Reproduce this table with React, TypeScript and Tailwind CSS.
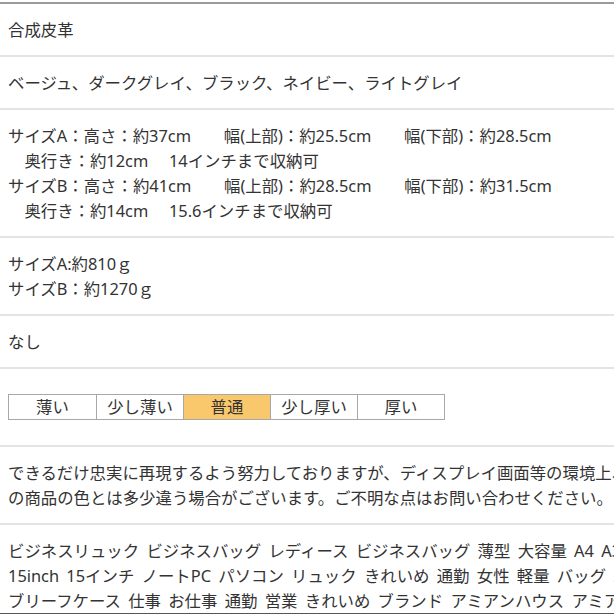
import React from "react";

const levels = ["薄い", "少し薄い", "普通", "少し厚い", "厚い"];

const sizes = [
  "サイズA：高さ：約37cm　　幅(上部)：約25.5cm　　幅(下部)：約28.5cm",
  "　奥行き：約12cm　 14インチまで収納可",
  "サイズB：高さ：約41cm　　幅(上部)：約28.5cm　　幅(下部)：約31.5cm",
  "　奥行き：約14cm　 15.6インチまで収納可",
];

const keywords = [
  "ビジネスリュック ビジネスバッグ レディース ビジネスバッグ 薄型 大容量 A4 A3 ノートパソコン",
  "15inch 15インチ ノートPC パソコン リュック きれいめ 通勤 女性 軽量 バッグ 2way 3way",
  "ブリーフケース 仕事 お仕事 通勤 営業 きれいめ ブランド アミアンハウス アミアン",
];

function Row({ children, className = "" }: { children: React.ReactNode; className?: string }) {
  return <div className={`px-2 border-b-2 border-[#e4e4e4] ${className}`}>{children}</div>;
}

export default function App() {
  return (
    <div
      className="w-[614px] h-[614px] overflow-hidden bg-white text-[#333333] text-[16.4px] leading-[25px] whitespace-nowrap"
      style={{ fontFamily: '"Noto Sans", "Noto Sans CJK JP", sans-serif' }}
    >
      <div className="mt-[2px] border-t-2 border-[#9a9a9a]">
        <Row className="py-[13px]">合成皮革</Row>
        <Row className="py-[13px]">ベージュ、ダークグレイ、ブラック、ネイビー、ライトグレイ</Row>
        <Row className="py-[13px]">
          {sizes.map((s) => (
            <div key={s}>{s}</div>
          ))}
        </Row>
        <Row className="py-[13px]">
          <div>サイズA:約810ｇ</div>
          <div>サイズB：約1270ｇ</div>
        </Row>
        <Row className="py-[13px]">なし</Row>
        <Row className="py-[25px]">
          <div className="flex w-fit border border-[#a8a8a8]">
            {levels.map((l, i) => (
              <div
                key={l}
                className={`w-[87px] h-[24px] flex items-center justify-center leading-none ${
                  i > 0 ? "border-l border-[#a8a8a8]" : ""
                } ${l === "普通" ? "bg-[#f9c86c]" : ""}`}
              >
                {l}
              </div>
            ))}
          </div>
        </Row>
        <Row className="py-[13px]">
          <div>できるだけ忠実に再現するよう努力しておりますが、ディスプレイ画面等の環境上、ページと実際</div>
          <div>の商品の色とは多少違う場合がございます。ご不明な点はお問い合わせください。</div>
        </Row>
        <div className="px-2 pt-[13px] border-b-2 border-[#555] [word-spacing:3px]">
          {keywords.map((k) => (
            <div key={k}>{k}</div>
          ))}
        </div>
      </div>
    </div>
  );
}
